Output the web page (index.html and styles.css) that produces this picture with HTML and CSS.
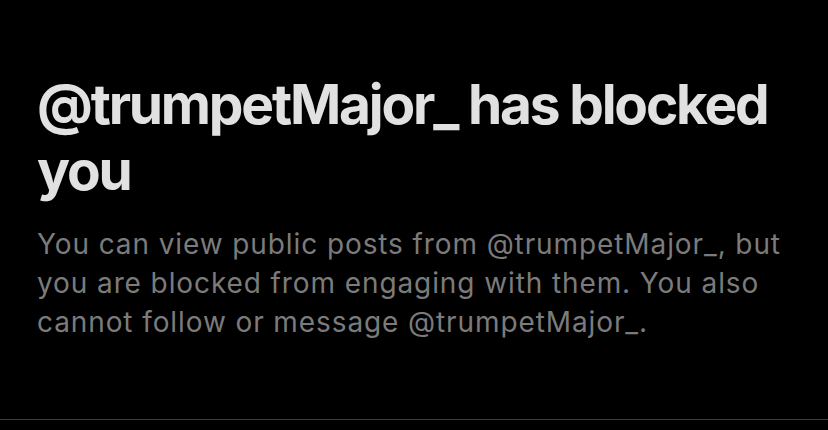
FILE: index.html
```html
<!DOCTYPE html>
<html lang="en">
<head>
    <meta charset="UTF-8">
    <meta name="viewport" content="width=device-width, initial-scale=1.0">
    <title>Blocked</title>
    <link rel="stylesheet" href="styles.css">
</head>
<body>

    <div id="blocked">
        <h1 class="titre">@trumpetMajor_ has blocked you</h1>
        <p class="texte">You can view public posts from @trumpetMajor_, but you are blocked from engaging with them. You also cannot follow or message @trumpetMajor_.</p>
    </div>
    <div class="separateur"></div>

</body>
</html>
```

FILE: styles.css
```css
body {
    background: #000000;
    margin: 0;
    padding: 0;
    font-family: Inter, "Noto Sans", sans-serif;
    overflow: hidden;
}

#blocked {
    height: 419px;
    padding: 0 30px 0 37px;
    box-sizing: border-box;
    padding-top: 71px;
}

.titre {
    margin: 0;
    color: #e1e1e1;
    font-size: 55px;
    font-weight: 700;
    line-height: 66px;
    letter-spacing: -2.2px;
}

.texte {
    margin: 22px 0 0 0;
    color: #7b7b7b;
    font-size: 28px;
    line-height: 39px;
    letter-spacing: 0.9px;
}

.separateur {
    height: 1px;
    background: #3c3c3c;
}
```
